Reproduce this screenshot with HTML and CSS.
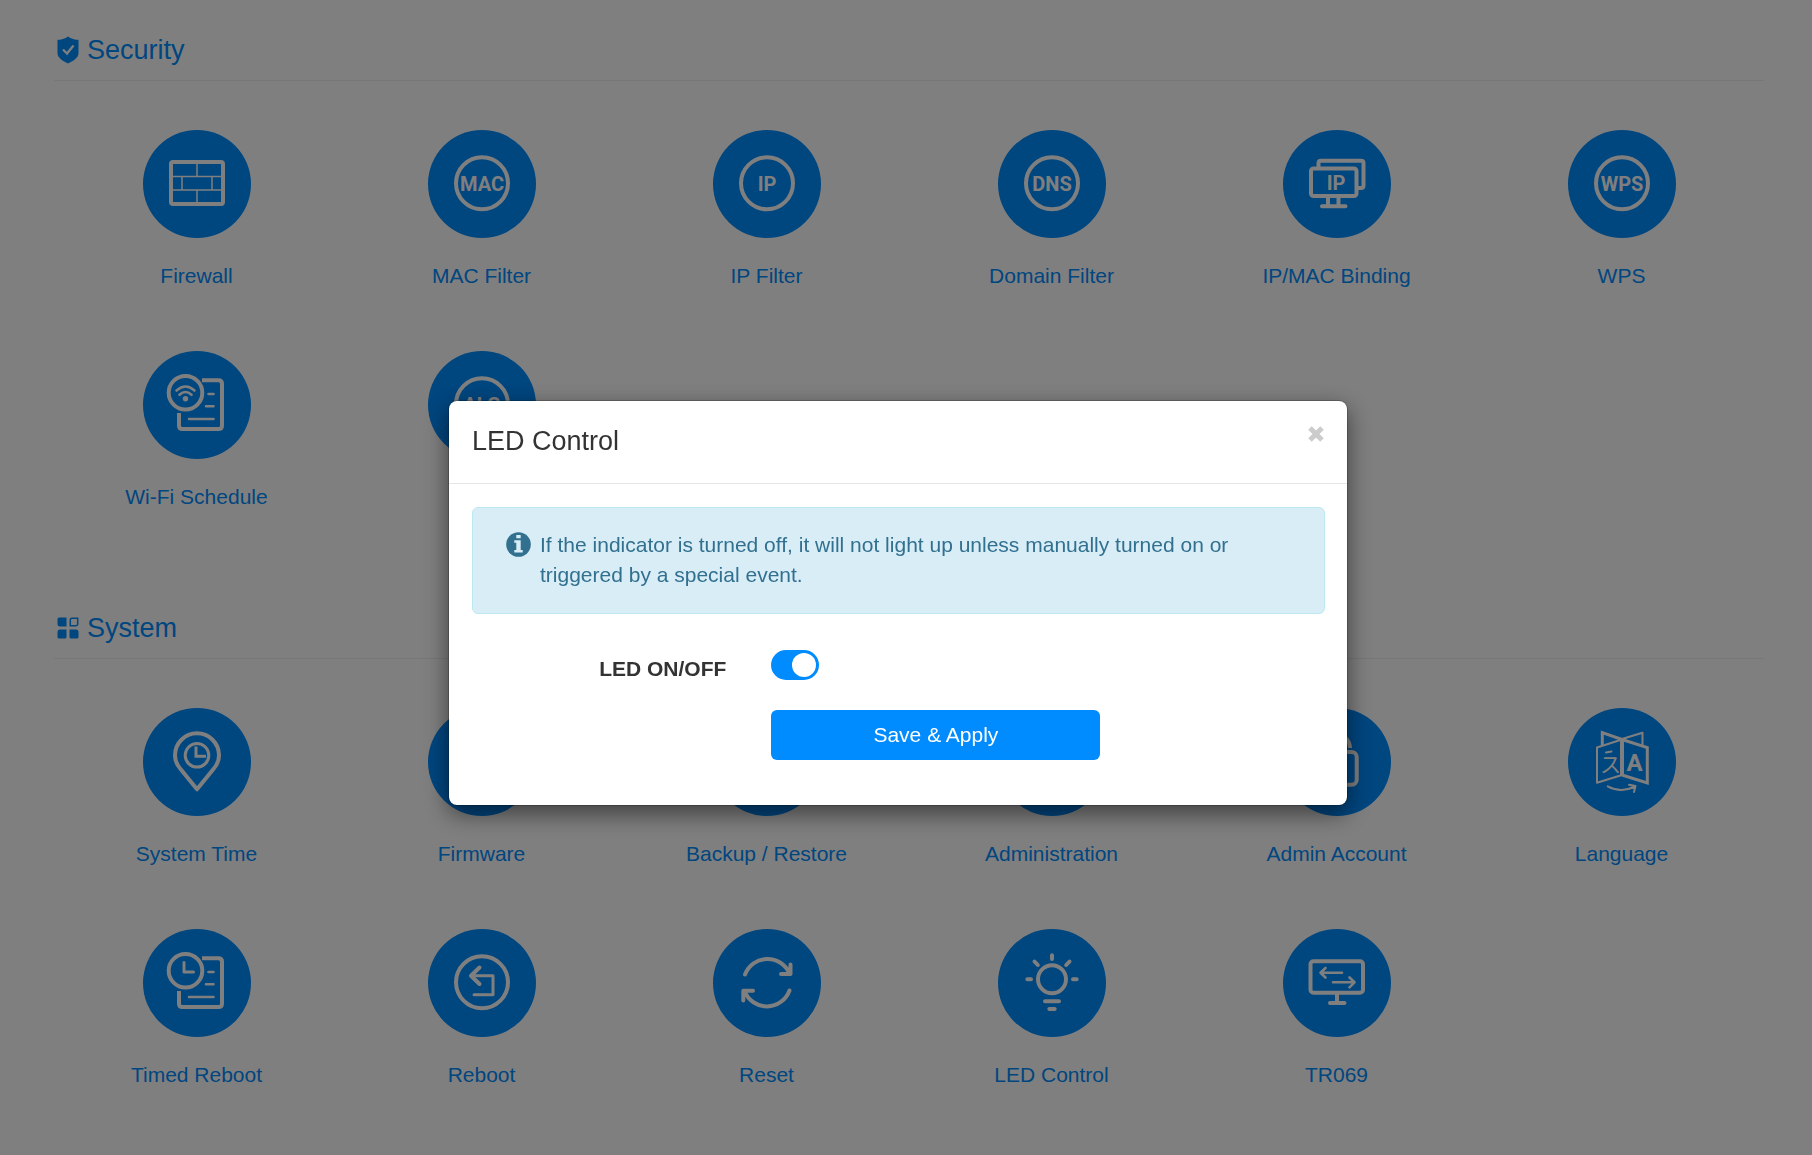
FILE: index.html
```html
<!DOCTYPE html>
<html lang="en">
<head>
    <meta charset="UTF-8">
    <meta name="viewport" content="width=device-width, initial-scale=1.0">
    <title>LED Control</title>
    <link rel="stylesheet" href="styles.css">
</head>
<body>

    <main class="page">
        <!-- Security -->
        <section class="section">
            <h2 class="section-title">
                <svg class="title-icon" width="22" height="28" viewBox="0 0 22 28">
                    <path class="fill" d="M11 0.5 C14 3 18 3.8 21.5 3.8 V17 C21.5 22 16 25 11 27.5 C6 25 0.5 22 0.5 17 V3.8 C4 3.8 8 3 11 0.5 Z"/>
                    <path class="check" d="M6 13.5 L10 17.5 L16.5 9.5"/>
                </svg>
                Security
            </h2>
            <div class="grid">
                <a class="item" href="#firewall">
                    <svg class="icon" viewBox="0 0 108 108">
                        <rect x="28" y="32" width="52" height="42" rx="2"/>
                        <path class="hair" d="M28 46.5 H80 M28 60 H80 M54 32 V46.5 M54 60 V74 M39 46.5 V60 M69 46.5 V60"/>
                    </svg>
                    <span>Firewall</span>
                </a>
                <a class="item" href="#mac-filter">
                    <svg class="icon" viewBox="0 0 108 108">
                        <circle cx="54" cy="53.3" r="26"/>
                        <text x="54" y="60.5">MAC</text>
                    </svg>
                    <span>MAC Filter</span>
                </a>
                <a class="item" href="#ip-filter">
                    <svg class="icon" viewBox="0 0 108 108">
                        <circle cx="54" cy="53.3" r="26"/>
                        <text x="54" y="60.5">IP</text>
                    </svg>
                    <span>IP Filter</span>
                </a>
                <a class="item" href="#domain-filter">
                    <svg class="icon" viewBox="0 0 108 108">
                        <circle cx="54" cy="53.3" r="26"/>
                        <text x="54" y="60.5">DNS</text>
                    </svg>
                    <span>Domain Filter</span>
                </a>
                <a class="item" href="#ip-mac-binding">
                    <svg class="icon" viewBox="0 0 108 108">
                        <rect x="28" y="38.5" width="45.5" height="27.5" rx="2.5"/>
                        <path d="M35.5 38 V33 Q35.5 30.7 38 30.7 H78 Q80.5 30.7 80.5 33 V55.5 Q80.5 58 78 58 H74"/>
                        <path d="M45 67 V76 M55.5 67 V76 M39 76.3 H62.5"/>
                        <text x="53" y="59.5">IP</text>
                    </svg>
                    <span>IP/MAC Binding</span>
                </a>
                <a class="item" href="#wps">
                    <svg class="icon" viewBox="0 0 108 108">
                        <circle cx="54" cy="53.3" r="26"/>
                        <text x="54" y="60.5">WPS</text>
                    </svg>
                    <span>WPS</span>
                </a>
                <a class="item" href="#wifi-schedule">
                    <svg class="icon" viewBox="0 0 108 108">
                        <circle cx="42.5" cy="41.7" r="16.8"/>
                        <path class="butt" d="M59 29.3 H75.5 Q79 29.3 79 32.8 V74.5 Q79 78 75.5 78 H39.5 Q36 78 36 74.5 V62"/>
                        <path class="thin" d="M65.5 43 H70.5 M63 55.3 H70.5 M46 68 H70.5"/>
                        <path class="thin" d="M33.5 39.5 Q42.5 31.5 51.5 39.5 M36.5 43.8 Q42.5 38.2 48.5 43.8"/>
                        <circle class="dot" cx="42.5" cy="47.7" r="2.7"/>
                    </svg>
                    <span>Wi-Fi Schedule</span>
                </a>
                <a class="item" href="#alg">
                    <svg class="icon" viewBox="0 0 108 108">
                        <circle cx="54" cy="53.3" r="26"/>
                        <text x="54" y="60.5">ALG</text>
                    </svg>
                    <span>ALG</span>
                </a>
            </div>
        </section>

        <!-- System -->
        <section class="section">
            <h2 class="section-title">
                <svg class="title-icon" width="22" height="22" viewBox="0 0 22 22">
                    <path class="fill" d="M2 0.5 H9.5 V9.5 H3 Q0.5 9.5 0.5 7 V2 Q0.5 0.5 2 0.5 Z"/>
                    <path class="fill" d="M3 12.5 H9.5 V20 Q9.5 21.5 8 21.5 H2 Q0.5 21.5 0.5 20 V15 Q0.5 12.5 3 12.5 Z"/>
                    <path class="fill" d="M12.5 12.5 H19 Q21.5 12.5 21.5 15 V20 Q21.5 21.5 20 21.5 H14 Q12.5 21.5 12.5 20 Z"/>
                    <path class="outline" d="M13.3 8.7 V3 Q13.3 1.3 15 1.3 H20.7 V7 Q20.7 8.7 19 8.7 Z"/>
                </svg>
                System
            </h2>
            <div class="grid">
                <a class="item" href="#system-time">
                    <svg class="icon" viewBox="0 0 108 108">
                        <path d="M54 81.3 L37.5 61 C34 57 32 52.5 32 47.3 A22 22 0 0 1 76 47.3 C76 52.5 74 57 70.5 61 Z"/>
                        <circle class="mid" cx="54" cy="47.3" r="11.8"/>
                        <path class="mid butt" d="M53 38.5 V48.3 H63"/>
                    </svg>
                    <span>System Time</span>
                </a>
                <a class="item" href="#firmware">
                    <svg class="icon" viewBox="0 0 108 108">
                        <circle cx="54" cy="53.3" r="26"/>
                        <path d="M54 66 V42 M44 51 L54 41 L64 51"/>
                    </svg>
                    <span>Firmware</span>
                </a>
                <a class="item" href="#backup">
                    <svg class="icon" viewBox="0 0 108 108">
                        <rect x="30" y="32" width="48" height="42" rx="3"/>
                        <path d="M44 44 V62 M38 56 L44 62 L50 56 M64 62 V44 M58 50 L64 44 L70 50"/>
                    </svg>
                    <span>Backup / Restore</span>
                </a>
                <a class="item" href="#administration">
                    <svg class="icon" viewBox="0 0 108 108">
                        <circle cx="54" cy="42" r="12"/>
                        <path d="M32 76 Q34 59 54 59 Q74 59 76 76 Z"/>
                    </svg>
                    <span>Administration</span>
                </a>
                <a class="item" href="#admin-account">
                    <svg class="icon" viewBox="0 0 108 108">
                        <rect x="34.3" y="44" width="39.4" height="32.7" rx="5"/>
                        <path class="butt" d="M41 40 C42 22 66 22 67 40"/>
                        <path d="M54 56 V65"/>
                    </svg>
                    <span>Admin Account</span>
                </a>
                <a class="item" href="#language">
                    <svg class="icon" viewBox="0 0 108 108">
                        <path class="line" d="M54 31.5 L29 39.5 V74.7 L54 67"/>
                        <path class="line" d="M54 31 L74.5 24.7 V36.5"/>
                        <path class="mid butt" d="M34.3 38 V24.5 L54 31.5 L79.3 39.5 V75 L54 67"/>
                        <path class="butt" d="M54 31 V68"/>
                        <path class="line" d="M38 44.5 L43.5 43.5"/>
                        <text class="kana" x="42.5" y="64">ス</text>
                        <text class="letter" x="66.5" y="63">A</text>
                        <path class="line" d="M39.7 78.3 Q53 85.5 67 78.5 M61 76.7 L67.5 78 L66 84"/>
                    </svg>
                    <span>Language</span>
                </a>
                <a class="item" href="#timed-reboot">
                    <svg class="icon" viewBox="0 0 108 108">
                        <circle cx="42.5" cy="41.7" r="16.8"/>
                        <path class="butt" d="M59 29.3 H75.5 Q79 29.3 79 32.8 V74.5 Q79 78 75.5 78 H39.5 Q36 78 36 74.5 V62"/>
                        <path class="thin" d="M65.5 43 H70.5 M63 55.3 H70.5 M46 68 H70.5"/>
                        <path class="mid" d="M41 33.5 V43 H50.5"/>
                    </svg>
                    <span>Timed Reboot</span>
                </a>
                <a class="item" href="#reboot">
                    <svg class="icon" viewBox="0 0 108 108">
                        <circle cx="54" cy="53.3" r="26"/>
                        <path class="mid" d="M43 46.7 H65 V65.7 H46"/>
                        <path d="M51.5 38.5 L43 46.7 L51.5 55"/>
                    </svg>
                    <span>Reboot</span>
                </a>
                <a class="item" href="#reset">
                    <svg class="icon" viewBox="0 0 108 108">
                        <path d="M32 45.5 A24 24 0 0 1 76.5 44.5 M77.5 35.5 V45 H68"/>
                        <path d="M76.5 61.5 A24 24 0 0 1 31.5 62 M30.3 71.5 V61.8 H40"/>
                    </svg>
                    <span>Reset</span>
                </a>
                <a class="item" href="#led-control">
                    <svg class="icon" viewBox="0 0 108 108">
                        <circle cx="54" cy="50.3" r="14"/>
                        <path d="M54 26.3 V30 M29.3 50.3 H33 M75 50.3 H78.7 M36.5 32.5 L39.8 36 M71.5 32.5 L68.2 36 M47 72.3 H61 M51.3 80 H56.7"/>
                    </svg>
                    <span>LED Control</span>
                </a>
                <a class="item" href="#tr069">
                    <svg class="icon" viewBox="0 0 108 108">
                        <rect x="27.5" y="32.3" width="52.5" height="31.4" rx="3"/>
                        <path d="M54 65 V74 M47 74 H61.5"/>
                        <path class="thin" d="M38 43.7 H59 M42.5 39 L37.5 43.7 L42.5 48.5 M50 53.3 H71 M66.5 48.5 L71.5 53.3 L66.5 58.3"/>
                    </svg>
                    <span>TR069</span>
                </a>
            </div>
        </section>
    </main>

    <!-- LED dialog -->
    <div class="backdrop">
        <div class="modal" role="dialog" aria-modal="true" aria-labelledby="modalTitle">
            <div class="modal-header">
                <h4 class="modal-title" id="modalTitle">LED Control</h4>
                <button type="button" class="close" aria-label="Close">
                    <svg width="18" height="16" viewBox="0 0 18 16">
                        <path d="M3 2 L15 14 M15 2 L3 14"/>
                    </svg>
                </button>
            </div>
            <form class="modal-body">
                <div class="alert">
                    <svg class="alert-icon" width="25" height="25" viewBox="0 0 25 25">
                        <circle cx="12.5" cy="12.5" r="12.3"/>
                        <path d="M10.3 3 H14.7 V6.3 H10.3 Z M8.3 8.3 H14.7 V18 H16.7 V20.5 H8.3 V18 H10.3 V10.8 H8.3 Z"/>
                    </svg>
                    <p>If the indicator is turned off, it will not light up unless manually turned on or triggered by a special event.</p>
                </div>
                <div class="form-row">
                    <label class="form-label" for="ledSwitch">LED ON/OFF</label>
                    <div class="form-field">
                        <input class="switch" type="checkbox" id="ledSwitch" checked>
                    </div>
                </div>
                <div class="form-row">
                    <div class="form-label"></div>
                    <div class="form-field">
                        <button type="button" class="btn">Save &amp; Apply</button>
                    </div>
                </div>
            </form>
        </div>
    </div>

</body>
</html>
```
FILE: styles.css
```css
* {
    box-sizing: border-box;
}

body {
    margin: 0;
    font-family: "Liberation Sans", Arial, sans-serif;
    font-size: 21px;
    line-height: 30px;
    color: #333;
    background-color: #fff;
}

h2, h4, p {
    margin: 0;
    font-weight: normal;
}

.page {
    padding: 35px 48px 48px 54px;
}

.section + .section {
    margin-top: 101px;
}

.section-title {
    display: flex;
    align-items: center;
    gap: 8px;
    height: 46px;
    padding: 0 3px 15px;
    font-size: 27px;
    line-height: 30px;
    color: #008cff;
    border-bottom: 1px solid #eee;
}

.title-icon .fill {
    fill: #008cff;
}

.title-icon .check {
    fill: none;
    stroke: #fff;
    stroke-width: 2.3;
}

.title-icon .outline {
    fill: none;
    stroke: #008cff;
    stroke-width: 1.5;
}

.grid {
    display: grid;
    grid-template-columns: repeat(6, 1fr);
    row-gap: 60px;
    margin-top: 49px;
}

.item {
    display: flex;
    flex-direction: column;
    align-items: center;
    gap: 23px;
    color: #008cff;
    text-decoration: none;
}

/* Round icons */
.icon {
    width: 108px;
    height: 108px;
    border-radius: 50%;
    background-color: #008cff;
    fill: none;
    stroke: #fff;
    stroke-width: 4;
    stroke-linecap: round;
    stroke-linejoin: round;
}

.icon .mid {
    stroke-width: 3;
}

.icon .thin {
    stroke-width: 2.6;
}

.icon .line {
    stroke-width: 2;
}

.icon .hair {
    stroke-width: 1.5;
}

.icon .butt {
    stroke-linecap: butt;
    stroke-linejoin: miter;
}

.icon .dot {
    fill: #fff;
    stroke: none;
}

.icon text {
    fill: #fff;
    stroke: none;
    font-family: Roboto, "Liberation Sans", sans-serif;
    font-size: 20px;
    font-weight: 700;
    text-anchor: middle;
}

.icon .kana {
    font-family: "Noto Sans CJK JP", sans-serif;
    font-size: 21px;
    font-weight: 400;
}

.icon .letter {
    font-size: 24px;
}

/* Modal */
.backdrop {
    position: fixed;
    inset: 0;
    display: flex;
    align-items: center;
    justify-content: center;
    padding: 51px 16px 0 0;
    background-color: rgba(0, 0, 0, 0.5);
}

.modal {
    width: 100%;
    max-width: 900px;
    background-color: #fff;
    background-clip: padding-box;
    border: 1px solid rgba(0, 0, 0, 0.2);
    border-radius: 9px;
    box-shadow: 0 8px 23px rgba(0, 0, 0, 0.5);
}

.modal-header {
    display: flex;
    align-items: flex-start;
    justify-content: space-between;
    padding: 25px 22px 27px 23px;
    border-bottom: 1px solid #e5e5e5;
}

.modal-title {
    font-size: 27px;
    line-height: 30px;
}

.close {
    display: flex;
    padding: 0;
    background: none;
    border: none;
    cursor: pointer;
}

.close path {
    stroke: #ccc;
    stroke-width: 5;
}

.modal-body {
    padding: 23px 22px 45px 23px;
}

.alert {
    display: flex;
    align-items: flex-start;
    gap: 9px;
    margin-bottom: 36px;
    padding: 22px 23px 23px 33px;
    color: #31708f;
    background-color: #d9edf7;
    border: 1px solid #bce8f1;
    border-radius: 6px;
}

.alert-icon {
    flex: none;
    margin-top: 2px;
}

.alert-icon circle {
    fill: #31708f;
}

.alert-icon path {
    fill: #d9edf7;
}

.form-row {
    display: flex;
    margin: 0 -22px 0 -23px;
}

.form-row + .form-row {
    margin-top: 28px;
}

.form-label {
    width: 33.333%;
    padding: 6px 22px 0;
    line-height: 26px;
    font-weight: bold;
    text-align: right;
}

.form-field {
    display: flex;
    align-items: flex-start;
    width: 41.666%;
    padding: 0 22px 0 23px;
}

.switch {
    display: flex;
    align-items: center;
    justify-content: flex-end;
    width: 48px;
    height: 30px;
    margin: 0;
    padding: 3px;
    appearance: none;
    background-color: #008cff;
    border-radius: 15px;
    cursor: pointer;
}

.switch::before {
    content: "";
    width: 24px;
    height: 24px;
    border-radius: 50%;
    background-color: #fff;
}

.switch:not(:checked) {
    justify-content: flex-start;
    background-color: #ccc;
}

.btn {
    width: 100%;
    height: 50px;
    font-family: inherit;
    font-size: 21px;
    color: #fff;
    background-color: #008cff;
    border: none;
    border-radius: 6px;
    cursor: pointer;
}
```
